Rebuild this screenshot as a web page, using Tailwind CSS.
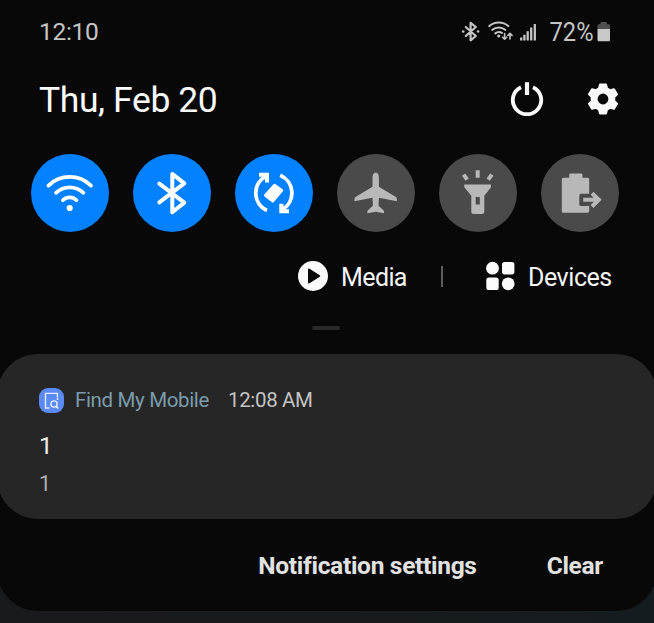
<!DOCTYPE html>
<html lang="en">
<head>
<meta charset="utf-8">
<title>Quick panel</title>
<script src="https://cdn.jsdelivr.net/npm/@tailwindcss/browser@4"></script>
</head>
<body class="w-[654px] h-[623px] overflow-hidden bg-linear-to-r from-[#191a1c] to-[#151c1f] font-['Roboto',sans-serif]">
<main class="-mx-[3px] h-[611px] bg-[#080808] rounded-b-[41px] flex flex-col">
  <!-- status bar -->
  <header class="h-[64px] shrink-0 pl-[42px] pr-[47px] flex items-center justify-between text-[#c4c4c4] text-[24.5px] leading-none">
    <span class="tracking-[-0.3px]">12:10</span>
    <div class="flex items-center pb-[2px]">
      <svg class="w-[150px] h-[30px]" viewBox="460 15 150 30" fill="none" stroke="#c4c4c4" stroke-linecap="round" stroke-linejoin="round">
        <path d="M465.8 26 475.8 35 470.6 39.3V21.8L475.8 26 465.8 35" stroke-width="2.2"/>
        <circle cx="463.2" cy="30.5" r="1.3" fill="#c4c4c4" stroke="none"/><circle cx="478.1" cy="30.5" r="1.3" fill="#c4c4c4" stroke="none"/>
        <path d="M489.3 25A14.5 14.5 0 0 1 508.3 25M492.3 28.8A10 10 0 0 1 505.2 28.8M495.3 32.4A6 6 0 0 1 502 31.8" stroke-width="2.1"/>
        <circle cx="498.7" cy="35" r="1.6" fill="#c4c4c4" stroke="none"/>
        <path d="M504.6 32.5V38M502.6 36.2 504.6 38.2 506.6 36.2M510 38V32.8M508 34.4 510 32.4 512 34.4" stroke-width="1.6"/>
        <path d="M521.2 36.5V39.5M524.4 33.7V39.5M527.7 30.3V39.5M531.2 26.6V39.5M534.8 23V39.5" stroke-width="2.3" stroke-linecap="butt"/>
        <text x="549.5" y="40.2" textLength="44" lengthAdjust="spacingAndGlyphs" font-size="25" fill="#c4c4c4" stroke="none">72%</text>
        <path d="M597.5 28V24.5Q597.5 23.3 599 23.3H600.6V21H606.8V23.3H608.8Q610 23.3 610 24.5V28Z" fill="#505050" stroke="none"/>
        <path d="M597.5 28H610V39Q610 40.2 608.8 40.2H598.7Q597.5 40.2 597.5 39Z" fill="#c9c9c9" stroke="none"/>
      </svg>
    </div>
  </header>

  <!-- date and system actions -->
  <section class="h-[72px] shrink-0 pl-[42px] pr-[37px] flex items-center justify-between text-[#fafafa]">
    <h1 class="text-[35.5px] leading-none tracking-[-0.4px] mt-[2px]">Thu, Feb 20</h1>
    <div class="flex items-center gap-[42px] mb-[3px]">
      <svg class="w-[34px] h-[34px]" viewBox="0 0 34 34" fill="none" stroke="#fafafa">
        <path d="M11 5.2A14.2 14.2 0 1 0 23 5.2" stroke-width="3.8"/><path d="M17 .2V13" stroke-width="4.2"/>
      </svg>
      <svg class="w-[34px] h-[34px]" viewBox="0 0 34 34" fill="#fafafa" stroke="#fafafa" stroke-width="2" stroke-linejoin="round" fill-rule="evenodd">
        <path d="M14 2.5H20L21 6.3 24.3 8.3 28 7.2 31 12.3 28.3 15V19L31 21.7 28 26.8 24.3 25.7 21 27.7 20 31.5H14L13 27.7 9.7 25.7 6 26.8 3 21.7 5.7 19V15L3 12.3 6 7.2 9.7 8.3 13 6.3ZM17 10.6A6.4 6.4 0 1 0 17 23.4A6.4 6.4 0 1 0 17 10.6Z"/>
      </svg>
    </div>
  </section>

  <!-- quick toggles -->
  <section class="mt-[18px] h-[78px] shrink-0 pl-[34px] flex gap-[24px]">
    <div class="size-[78px] rounded-full bg-[#0381fe]">
      <svg class="size-[78px]" viewBox="0 0 78 78" fill="none" stroke="#fff" stroke-width="3.7" stroke-linecap="round">
        <path d="M17.4 31.6A30.5 30.5 0 0 1 60 31.6M25 38.8A19.8 19.8 0 0 1 52.4 38.8M31.9 46.2A9.5 9.5 0 0 1 45.5 46.2"/><circle cx="38.7" cy="54" r="3.1" fill="#fff" stroke="none"/>
      </svg>
    </div>
    <div class="size-[78px] rounded-full bg-[#0381fe]">
      <svg class="size-[78px]" viewBox="0 0 78 78" fill="none" stroke="#fff" stroke-width="4" stroke-linecap="round" stroke-linejoin="round">
        <path d="M26.3 29.6 51.3 48.6 39.3 58.2V19.9L51.3 29.4 26.3 48.4"/>
      </svg>
    </div>
    <div class="size-[78px] rounded-full bg-[#0381fe]">
      <svg class="size-[78px]" viewBox="0 0 78 78" fill="none" stroke="#fff" stroke-width="3.8">
        <path d="M32 56.6A19.3 19.3 0 0 1 30.5 22.3M45.2 21.2A19.3 19.3 0 0 1 47.5 55.5"/>
        <path d="M24 20.8H32V28.5M54 57.2H46.4V49.8" stroke-width="4"/>
        <path d="M24 19H33.5V28.5L28.5 24ZM54 59H44.7V49.8L49.5 54Z" fill="#fff" stroke="none"/>
        <path d="M39.5 31.2 46.8 36.4 37.8 47.1 30.3 41.5Z" fill="#fff" stroke-width="2.8" stroke-linejoin="round"/>
      </svg>
    </div>
    <div class="size-[78px] rounded-full bg-[#4a4a4a]">
      <svg class="size-[78px]" viewBox="0 0 78 78" fill="#b8b8b8">
        <path d="M38.7 18.5C40.8 18.5 41.9 20.8 41.9 24V32.8L58.5 42.8Q59.9 43.7 59.9 45V47.2L41.9 43.8 41.5 51.8 46.2 56Q47 56.8 47 57.7V59.2L38.7 57.7 30.4 59.2V57.7Q30.4 56.8 31.2 56L35.9 51.8 35.5 43.8 17.5 47.2V45Q17.5 43.7 18.9 42.8L35.5 32.8V24C35.5 20.8 36.6 18.5 38.7 18.5Z"/>
      </svg>
    </div>
    <div class="size-[78px] rounded-full bg-[#4a4a4a]">
      <svg class="size-[78px]" viewBox="0 0 78 78" fill="#b8b8b8" fill-rule="evenodd">
        <path d="M25.3 30.5H52V33.3L45.3 41.7V57.5Q45.3 60 42.8 60H35Q32.3 60 32.3 57.5V41.7L25.3 33.3ZM36.7 43V50.4H40.8V43Z"/>
        <path d="M38.7 16.2V23.8M24.6 20.6 28.2 25.7M52.8 20.6 49.2 25.7" stroke="#b8b8b8" stroke-width="4"/>
      </svg>
    </div>
    <div class="size-[78px] rounded-full bg-[#4a4a4a]">
      <svg class="size-[78px]" viewBox="0 0 78 78" fill="#b8b8b8">
        <path d="M22.3 23.7H28.2V20.8Q28.2 19.6 29.4 19.6H40.2Q41.4 19.6 41.4 20.8V23.7H46.6Q48.2 23.7 48.2 25.3V39.7H40Q38.3 39.7 38.3 41.4V50.4Q38.3 52.1 40 52.1H48.2V57Q48.2 58.8 46.6 58.8H22.3Q20.8 58.8 20.8 57.2V25.3Q20.8 23.7 22.3 23.7Z"/>
        <path d="M51 39 58 45.7 51 52.5" fill="none" stroke="#4a4a4a" stroke-width="7"/>
        <path d="M42.2 45.8H57.5M51 39.2 57.8 45.8 51 52.5" fill="none" stroke="#b8b8b8" stroke-width="4"/>
      </svg>
    </div>
  </section>

  <!-- media and devices -->
  <section class="mt-[19px] h-[50px] shrink-0 pl-[301px] flex items-center text-[#f5f5f5] text-[25px] tracking-[-0.6px] leading-none">
    <svg class="w-[30px] h-[30px]" viewBox="0 0 30 30"><circle cx="15" cy="15" r="15" fill="#fafafa"/><path d="M11 8.5 21.2 15 11 21.5Z" fill="#080808" stroke="#080808" stroke-width="2" stroke-linejoin="round"/></svg>
    <span class="ml-[13px] w-[67px] mt-[2px] whitespace-nowrap">Media</span>
    <span class="ml-[33px] w-[2px] h-[21px] bg-[#5c5c5c]"></span>
    <svg class="ml-[42px] w-[30px] h-[30px]" viewBox="0 0 30 30" fill="#fafafa"><circle cx="7.5" cy="7.2" r="6.4"/><rect x="17" y="1" width="12.4" height="12.4" rx="2.6"/><rect x="1.3" y="16.6" width="12.4" height="12.4" rx="2.6"/><circle cx="23.2" cy="22.8" r="6.4"/></svg>
    <span class="ml-[13px] mt-[2px] whitespace-nowrap tracking-[-0.45px]">Devices</span>
  </section>
  <div class="mt-[25px] ml-[315px] w-[28px] h-[4px] shrink-0 rounded-full bg-[#292929]"></div>

  <!-- notification -->
  <article class="mt-[24px] h-[165px] shrink-0 rounded-[41px] bg-[#262626] pl-[42px] pt-[33px]">
    <div class="flex items-center h-[26px] text-[20.5px] tracking-[-0.35px] leading-none">
      <svg class="w-[25px] h-[25px]" viewBox="0 0 25 25" fill="none" stroke="#e6edff" stroke-width="1.4">
        <rect width="25" height="25" rx="9" fill="#5b8af5" stroke="none"/>
        <path d="M18.4 9V5.4H6.5V20H10.5M18.5 9.5V12M18.8 19.8 17 18"/><circle cx="15" cy="16" r="3.1"/><path d="M17.2 18.5 19.3 20.5"/>
      </svg>
      <span class="ml-[11px] mt-px text-[#7b9dab] w-[135px] whitespace-nowrap">Find My Mobile</span>
      <span class="ml-[18px] mt-px text-[#c3c3c3]">12:08 AM</span>
    </div>
    <p class="mt-[20px] text-[24.5px] leading-[26px] text-[#ededed]">1</p>
    <p class="mt-[13px] text-[21.5px] leading-[24px] text-[#b0b0b0]">1</p>
  </article>

  <footer class="grow flex items-center justify-end pt-[2px] pr-[54px] gap-[70px] text-[#e2e2e2] text-[24.5px] tracking-[-0.3px] font-bold leading-none">
    <span>Notification settings</span>
    <span>Clear</span>
  </footer>
</main>
</body>
</html>
